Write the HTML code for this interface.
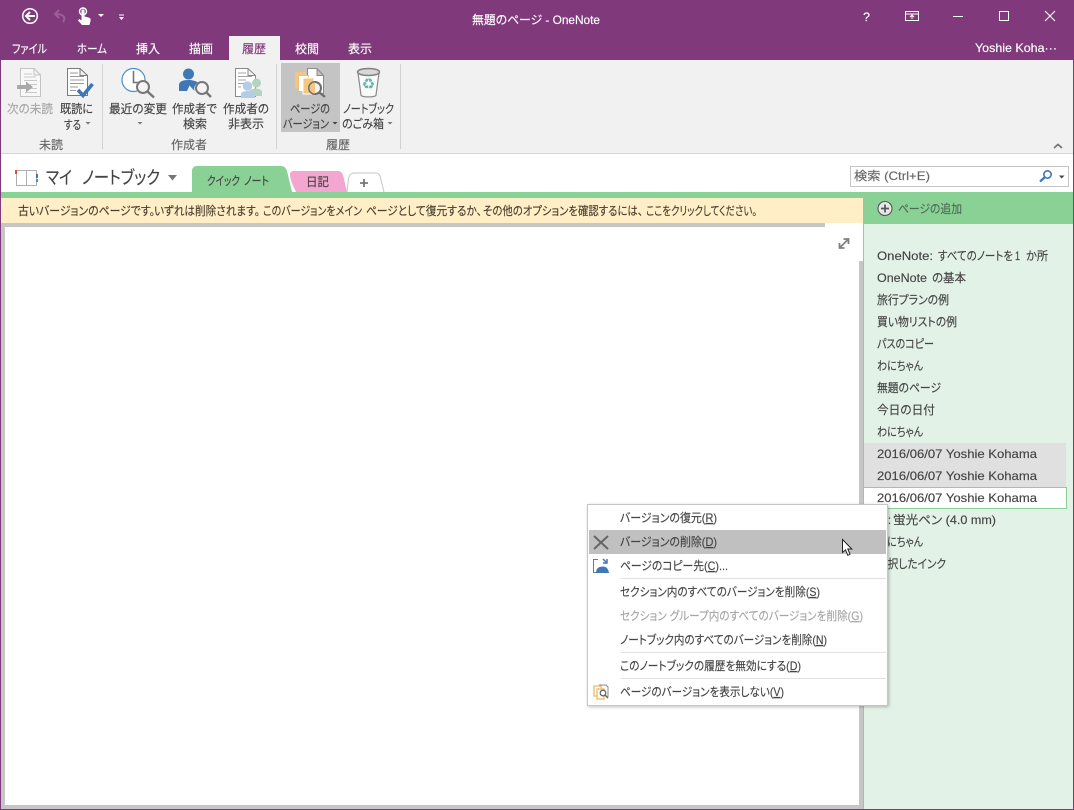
<!DOCTYPE html>
<html lang="ja"><head><meta charset="utf-8"><title>無題のページ - OneNote</title>
<style>
html,body{margin:0;padding:0;background:#fff;overflow:hidden}
svg{display:block}
text{font-family:"Liberation Sans","Noto Sans CJK JP",sans-serif;font-size:12px;fill:#444;stroke:#444;stroke-width:.15px;font-feature-settings:"palt";white-space:pre}
.w{fill:#fff;stroke:#fff}
.d{fill:#a6a6a6;stroke:#a6a6a6}
.g{fill:#666;stroke:#666}
.m{fill:#444;stroke:#444}
.u{text-decoration:underline}
.y{fill:#4a4030;stroke:#4a4030}
</style></head><body>
<svg width="1074" height="810" viewBox="0 0 1074 810" xmlns="http://www.w3.org/2000/svg">
<defs><filter id="sh" x="-5%" y="-5%" width="110%" height="110%"><feDropShadow dx="1" dy="1" stdDeviation="1.5" flood-color="#000" flood-opacity=".25"/></filter></defs>
<rect width="1074" height="810" fill="#fff"/>
<!-- title -->
<rect width="1074" height="60" fill="#80397b"/>
<rect x="0" y="60" width="1" height="750" fill="#80397b"/><rect x="1073" y="60" width="1" height="750" fill="#80397b"/>
<rect x="0" y="809" width="1074" height="1" fill="#80397b"/>
<rect x="229" y="36" width="51" height="24" fill="#f1f1f1"/>
<!-- QAT -->
<circle cx="30" cy="16" r="7.300" fill="none" stroke="#fff" stroke-width="1.500"/>
<path d="M35 16H26M30 12L26 16L30 20" fill="none" stroke="#fff" stroke-width="2"/>
<path d="M63 22C66.500 17 63 14 55 14M59 10L55 14L59 18" fill="none" stroke="#9a5f96" stroke-width="2"/>
<circle cx="83" cy="11.500" r="3.500" fill="none" stroke="#fff" stroke-width="1.400"/>
<path d="M81.500 10.500C81.500 9 84.500 9 84.500 10.500V16.500L88.500 17.500C90.500 18 91 19.500 90.500 21L89.500 25H82L78 20.500L79.300 19L81.500 20.500Z" fill="#fff"/>
<path d="M98 14H104L101 17Z" fill="#fff"/>
<path d="M119 14.500H124V15.500H119ZM119 17H124L121.500 20Z" fill="#fff"/>
<text class="w" x="472" y="24" textLength="128" lengthAdjust="spacingAndGlyphs">無題のページ - OneNote</text>
<text class="w" x="863" y="21" textLength="7" lengthAdjust="spacingAndGlyphs">?</text>
<path d="M905.500 11.500H918.500V20.500H905.500ZM905.500 14H918.500M912 19V15.500M910 17L912 15L914 17" fill="none" stroke="#fff"/>
<rect x="953" y="16" width="10" height="1" fill="#fff"/>
<rect x="999.500" y="11.500" width="9" height="9" fill="none" stroke="#fff"/>
<path d="M1045 11L1055 21M1055 11L1045 21" stroke="#fff" stroke-width="1.100"/>
<!-- tabs -->
<text class="w" x="12" y="53" textLength="35" lengthAdjust="spacingAndGlyphs">ファイル</text>
<text class="w" x="77" y="53" textLength="30" lengthAdjust="spacingAndGlyphs">ホーム</text>
<text class="w" x="136" y="53" textLength="24" lengthAdjust="spacingAndGlyphs">挿入</text>
<text class="w" x="189" y="53" textLength="24" lengthAdjust="spacingAndGlyphs">描画</text>
<text x="242" y="53" textLength="24" lengthAdjust="spacingAndGlyphs" style="fill:#80397b;stroke:#80397b">履歴</text>
<text class="w" x="295" y="53" textLength="24" lengthAdjust="spacingAndGlyphs">校閲</text>
<text class="w" x="348" y="53" textLength="24" lengthAdjust="spacingAndGlyphs">表示</text>
<text class="w" x="975" y="52" textLength="82" lengthAdjust="spacingAndGlyphs">Yoshie Koha···</text>
<!-- ribbon -->
<rect x="1" y="60" width="1072" height="93" fill="#f1f1f1"/>
<rect x="1" y="153" width="1072" height="1" fill="#d6d6d6"/>
<rect x="102" y="64" width="1" height="85" fill="#d2d2d2"/><rect x="276" y="64" width="1" height="85" fill="#d2d2d2"/><rect x="400" y="64" width="1" height="85" fill="#d2d2d2"/>
<rect x="281" y="63" width="59" height="69" fill="#c4c4c4"/>
<!-- icon: next unread -->
<path d="M20.500 68.500H34L40.500 75V96.500H20.500ZM34 68.500V75H40.500" fill="#f8f8f8" stroke="#c4c4c4"/>
<path d="M24 74H32M24 77H36M24 80.500H37M30 84.500H37M30 88.500H37M25 92.500H37" stroke="#c8c8c8"/>
<path d="M17 85H26V81.500L33 87L26 92.500V89H17Z" fill="#a9a9a9"/>
<!-- icon: mark read -->
<path d="M67.500 68.500H80L87.500 75.500V95.500H67.500ZM80 68.500V75.500H87.500" fill="#fff" stroke="#7a7a7a"/>
<path d="M70 73H78M70 76.500H84M70 80H84M70 83.500H84M70 87H78M70 90.500H76" stroke="#9a9a9a"/>
<path d="M78 90L83 95.500L92.500 84" fill="none" stroke="#3c78b8" stroke-width="3.600"/>
<!-- icon: recent -->
<circle cx="133.500" cy="80" r="11.500" fill="#fff" stroke="#4c8cc8" stroke-width="1.200"/>
<path d="M133.500 71V82.500H139" fill="none" stroke="#777" stroke-width="1.600"/>
<circle cx="143" cy="87" r="6" fill="#f4f4f4" stroke="#777" stroke-width="2"/>
<path d="M147.500 91.500L154 97.500" stroke="#777" stroke-width="2.400"/>
<!-- icon: by author -->
<circle cx="188.500" cy="74" r="5.500" fill="#3f78b5"/>
<path d="M179 91V85C179 81.500 183 80 188.500 80C192 80 196 81 198 82.500C194 85 194 88 194.500 91L189.500 85.500L187 91Z" fill="#3f78b5"/>
<circle cx="202" cy="88" r="6" fill="#f4f4f4" stroke="#777" stroke-width="2"/>
<path d="M206.500 92.500L211 97" stroke="#777" stroke-width="2.400"/>
<!-- icon: hide authors -->
<path d="M235.500 68.500H248L255.500 75.500V96.500H235.500ZM248 68.500V75.500H255.500" fill="#fff" stroke="#8a8a8a"/>
<path d="M238 73H246M238 76.500H252M238 80H246M238 83.500H244M238 87H241" stroke="#a4a4a4"/>
<circle cx="256.500" cy="83" r="4.500" fill="#b4d4c0"/><path d="M249 96V92C249 90 253 88.500 256 88.500C259 88.500 262 90 262 92V96Z" fill="#b4d4c0"/>
<circle cx="247.500" cy="86" r="4.800" fill="#b4cce6"/><path d="M241 98V94C241 92 244 91 248 91C252 91 255 92 255 94V98Z" fill="#b4cce6"/>
<!-- icon: page versions -->
<path d="M307.500 68.500H317L323.500 75.500V93.500H307.500ZM317 68.500V75.500H323.500" fill="#fff" stroke="#8a8a8a"/>
<rect x="295" y="72" width="11" height="16" fill="#f3c77f"/>
<rect x="298.500" y="75.500" width="10" height="16" fill="#fff" stroke="#f0c070"/>
<rect x="303" y="78" width="11" height="16" fill="#f3c77f" stroke="#fff"/>
<circle cx="315" cy="88" r="6" fill="#f3f3f3" stroke="#6f6f6f" stroke-width="2"/>
<path d="M315 82.500A5.500 5.500 0 0 0 315 93.500Z" fill="#f3c77f"/>
<path d="M319.500 92.500L325 97" stroke="#6f6f6f" stroke-width="2.400"/>
<!-- icon: recycle -->
<path d="M358 73L361 95C361 97.500 376 97.500 376 95L379 73" fill="#fafafa" stroke="#8a8a8a" stroke-width="1.200"/>
<ellipse cx="368.500" cy="72" rx="11" ry="3.500" fill="#d8d8d8" stroke="#808080" stroke-width="1.500"/>
<text x="368.500" y="89" text-anchor="middle" style="font-family:'DejaVu Sans',sans-serif;font-size:15px;fill:#5fb8a8;stroke:none">♻</text>
<!-- ribbon text -->
<text class="d" x="7" y="113" textLength="46" lengthAdjust="spacingAndGlyphs">次の未読</text>
<text x="60" y="113" textLength="33" lengthAdjust="spacingAndGlyphs">既読に</text>
<text x="64" y="129" textLength="17" lengthAdjust="spacingAndGlyphs">する</text>
<path d="M85.500 122H90.500L88 124.500Z" fill="#777"/>
<text x="109" y="113" textLength="58" lengthAdjust="spacingAndGlyphs">最近の変更</text>
<path d="M137.500 122H142.500L140 124.500Z" fill="#777"/>
<text x="172" y="113" textLength="45" lengthAdjust="spacingAndGlyphs">作成者で</text>
<text x="183" y="128" textLength="24" lengthAdjust="spacingAndGlyphs">検索</text>
<text x="223" y="113" textLength="46" lengthAdjust="spacingAndGlyphs">作成者の</text>
<text x="228" y="128" textLength="36" lengthAdjust="spacingAndGlyphs">非表示</text>
<text x="290" y="113" textLength="40" lengthAdjust="spacingAndGlyphs">ページの</text>
<text x="283" y="128" textLength="46" lengthAdjust="spacingAndGlyphs">バージョン</text>
<path d="M332.500 122H337.500L335 124.500Z" fill="#444"/>
<text x="343" y="113" textLength="51" lengthAdjust="spacingAndGlyphs">ノートブック</text>
<text x="342" y="128" textLength="42" lengthAdjust="spacingAndGlyphs">のごみ箱</text>
<path d="M387.500 122H392.500L390 124.500Z" fill="#777"/>
<text class="g" x="39" y="149" textLength="24" lengthAdjust="spacingAndGlyphs">未読</text>
<text class="g" x="171" y="149" textLength="36" lengthAdjust="spacingAndGlyphs">作成者</text>
<text class="g" x="326" y="149" textLength="24" lengthAdjust="spacingAndGlyphs">履歴</text>
<path d="M1054 148L1058 144.500L1062 148" fill="none" stroke="#777" stroke-width="1.800"/>
<!-- notebook bar -->
<path d="M16.500 170.500H26.500V185.500H16.500ZM26.500 170.500H36.500V185.500H26.500Z" fill="#fff" stroke="#b0b0b0"/>
<rect x="15" y="170" width="2" height="4" fill="#e0522c"/><rect x="36" y="174" width="2" height="4" fill="#3c78b8"/><rect x="36" y="179" width="2" height="3" fill="#4a9a8a"/>
<text x="46" y="184" style="font-size:18px" textLength="26" lengthAdjust="spacingAndGlyphs">マイ</text>
<text x="82" y="184" style="font-size:18px" textLength="78" lengthAdjust="spacingAndGlyphs">ノートブック</text>
<path d="M168 175H177L172.500 180.500Z" fill="#777"/>
<path d="M192 192V171C192 168 194 166 197 166H281C284 166 286 168 287 171L292 192Z" fill="#8ad195"/>
<path d="M290 174C290 172 292 171 294 171H337C340 171 342 172 343 175L347 192H296C293 185 290 180 290 174Z" fill="#f2a6d0"/>
<path d="M347 192C348 185 348 179 349 177C350 174 352 173 354 173H376C378 173 379 174 380 176L384 192" fill="#fff" stroke="#c6c6c6"/>
<text x="207" y="185" textLength="33" lengthAdjust="spacingAndGlyphs">クイック</text>
<text x="244" y="185" textLength="25" lengthAdjust="spacingAndGlyphs">ノート</text>
<text x="306" y="186" textLength="23" lengthAdjust="spacingAndGlyphs">日記</text>
<path d="M360 183H368M364 179V187" stroke="#777" stroke-width="1.800"/>
<rect x="850.500" y="166.500" width="218" height="20" fill="#fff" stroke="#c6c6c6"/>
<text class="g" x="854" y="180" textLength="76" lengthAdjust="spacingAndGlyphs">検索 (Ctrl+E)</text>
<circle cx="1047.500" cy="174.500" r="3.700" fill="#fff" stroke="#3c78b8" stroke-width="1.600"/>
<path d="M1044.500 177.500L1040 181.500" stroke="#3c78b8" stroke-width="2.200"/>
<path d="M1059 175.500H1064.500L1061.700 178.500Z" fill="#444"/>
<!-- content frame -->
<rect x="1" y="192" width="1072" height="6" fill="#8ad195"/>
<rect x="1" y="198" width="862" height="611" fill="#c6c6c6"/>
<rect x="1" y="198" width="862" height="25" fill="#ffeec6"/>
<text class="y" x="18" y="215" textLength="137" lengthAdjust="spacingAndGlyphs">古いバージョンのページです。</text>
<text class="y" x="154" y="215" textLength="106" lengthAdjust="spacingAndGlyphs">いずれは削除されます。</text>
<text class="y" x="263" y="215" textLength="99" lengthAdjust="spacingAndGlyphs">このバージョンをメイン</text>
<text class="y" x="366" y="215" textLength="116" lengthAdjust="spacingAndGlyphs">ページとして復元するか、</text>
<text class="y" x="483" y="215" textLength="160" lengthAdjust="spacingAndGlyphs">その他のオプションを確認するには、</text>
<text class="y" x="646" y="215" textLength="111" lengthAdjust="spacingAndGlyphs">ここをクリックしてください。</text>
<rect x="5" y="227" width="854" height="578" fill="#fff"/>
<rect x="825" y="223" width="38" height="38" fill="#fff"/>
<path d="M840 247.500L848 239.500M843.500 239H848.500V244M839.500 243V248H844.500" fill="none" stroke="#808080" stroke-width="1.800"/>
<!-- sidebar -->
<rect x="863" y="198" width="210" height="26" fill="#8ad195"/>
<rect x="863" y="224" width="210" height="585" fill="#e3f2e7"/>
<rect x="863" y="224" width="1" height="585" fill="#8ad195"/>
<circle cx="885" cy="208.500" r="7" fill="#e8e8e8" stroke="#555" stroke-width="1.100"/>
<path d="M881 208.500H889M885 204.500V212.500" stroke="#555" stroke-width="1.700"/>
<text x="898" y="213" style="fill:#4f6f56;stroke:#4f6f56" textLength="64" lengthAdjust="spacingAndGlyphs">ページの追加</text>
<g>
<text x="877" y="260" textLength="56" lengthAdjust="spacingAndGlyphs">OneNote:</text>
<text x="938" y="260" textLength="75" lengthAdjust="spacingAndGlyphs">すべてのノートを</text>
<text x="1015" y="260" textLength="5" lengthAdjust="spacingAndGlyphs">1</text>
<text x="1026" y="260" textLength="22" lengthAdjust="spacingAndGlyphs">か所</text>
<text x="877" y="282" textLength="50" lengthAdjust="spacingAndGlyphs">OneNote</text>
<text x="932" y="282" textLength="34" lengthAdjust="spacingAndGlyphs">の基本</text>
<text x="877" y="304" textLength="72" lengthAdjust="spacingAndGlyphs">旅行プランの例</text>
<text x="877" y="326" textLength="80" lengthAdjust="spacingAndGlyphs">買い物リストの例</text>
<text x="877" y="348" textLength="57" lengthAdjust="spacingAndGlyphs">パスのコピー</text>
<text x="877" y="370" textLength="46" lengthAdjust="spacingAndGlyphs">わにちゃん</text>
<text x="877" y="392" textLength="64" lengthAdjust="spacingAndGlyphs">無題のページ</text>
<text x="877" y="414" textLength="58" lengthAdjust="spacingAndGlyphs">今日の日付</text>
<text x="877" y="436" textLength="46" lengthAdjust="spacingAndGlyphs">わにちゃん</text>
<rect x="864" y="443" width="202" height="44" fill="#e0e0e0"/>
<rect x="863.500" y="487.500" width="203" height="21" fill="#fff" stroke="#8ad195"/>
<text x="877" y="458" textLength="160" lengthAdjust="spacingAndGlyphs">2016/06/07 Yoshie Kohama</text>
<text x="877" y="480" textLength="160" lengthAdjust="spacingAndGlyphs">2016/06/07 Yoshie Kohama</text>
<text x="877" y="502" textLength="160" lengthAdjust="spacingAndGlyphs">2016/06/07 Yoshie Kohama</text>
<text x="888" y="524" textLength="3" lengthAdjust="spacingAndGlyphs">:</text>
<text x="893" y="524" textLength="103" lengthAdjust="spacingAndGlyphs">蛍光ペン (4.0 mm)</text>
<text x="877" y="546" textLength="46" lengthAdjust="spacingAndGlyphs">わにちゃん</text>
<text x="877" y="568" textLength="69" lengthAdjust="spacingAndGlyphs">選択したインク</text>
</g>
<!-- menu -->
<rect x="587.500" y="504.500" width="300" height="201" fill="#fff" stroke="#c6c6c6" filter="url(#sh)"/>
<rect x="589" y="530" width="297" height="24" fill="#c0c0c0"/>
<rect x="621" y="578" width="265" height="1" fill="#e2e2e2"/>
<rect x="621" y="652" width="265" height="1" fill="#e2e2e2"/>
<rect x="621" y="678" width="265" height="1" fill="#e2e2e2"/>
<path d="M594 536L608 549M608 536L594 549" stroke="#666" stroke-width="2"/>
<path d="M598 559.500H593.500V572.500H597" fill="none" stroke="#777"/>
<path d="M596 573C596 568 599 566.500 603 566.500C606 566.500 608 568 609 573Z" fill="#3f78b5"/>
<path d="M603 559L607 563M607 559V563H603" fill="none" stroke="#3f78b5" stroke-width="1.500"/>
<rect x="594" y="686" width="7" height="10" fill="none" stroke="#eec27a" stroke-width="1.500"/>
<rect x="597" y="689" width="7" height="10" fill="#fff" stroke="#eec27a" stroke-width="1.500"/>
<path d="M599 685H606L608 687V697" fill="none" stroke="#888"/>
<circle cx="603" cy="693" r="2.800" fill="#fff" stroke="#666" stroke-width="1.300"/>
<path d="M605 695L608 698" stroke="#666" stroke-width="1.500"/>
<text class="m" x="620" y="522" textLength="97" lengthAdjust="spacingAndGlyphs">バージョンの復元(<tspan class="u">R</tspan>)</text>
<text class="m" x="620" y="546" textLength="97" lengthAdjust="spacingAndGlyphs">バージョンの削除(<tspan class="u">D</tspan>)</text>
<text class="m" x="620" y="570" textLength="108" lengthAdjust="spacingAndGlyphs">ページのコピー先(<tspan class="u">C</tspan>)...</text>
<text class="m" x="620" y="596" textLength="200" lengthAdjust="spacingAndGlyphs">セクション内のすべてのバージョンを削除(<tspan class="u">S</tspan>)</text>
<text class="d" x="620" y="620" textLength="243" lengthAdjust="spacingAndGlyphs">セクション グループ内のすべてのバージョンを削除(<tspan class="u">G</tspan>)</text>
<text class="m" x="620" y="644" textLength="207" lengthAdjust="spacingAndGlyphs">ノートブック内のすべてのバージョンを削除(<tspan class="u">N</tspan>)</text>
<text class="m" x="620" y="670" textLength="181" lengthAdjust="spacingAndGlyphs">このノートブックの履歴を無効にする(<tspan class="u">D</tspan>)</text>
<text class="m" x="620" y="696" textLength="164" lengthAdjust="spacingAndGlyphs">ページのバージョンを表示しない(<tspan class="u">V</tspan>)</text>
<!-- cursor -->
<path d="M842.500 539.500V552.500L845.500 549.800L847.800 555.300L850 554.300L847.800 549H851.800Z" fill="#fff" stroke="#222" stroke-width="1"/>
</svg>
</body></html>
